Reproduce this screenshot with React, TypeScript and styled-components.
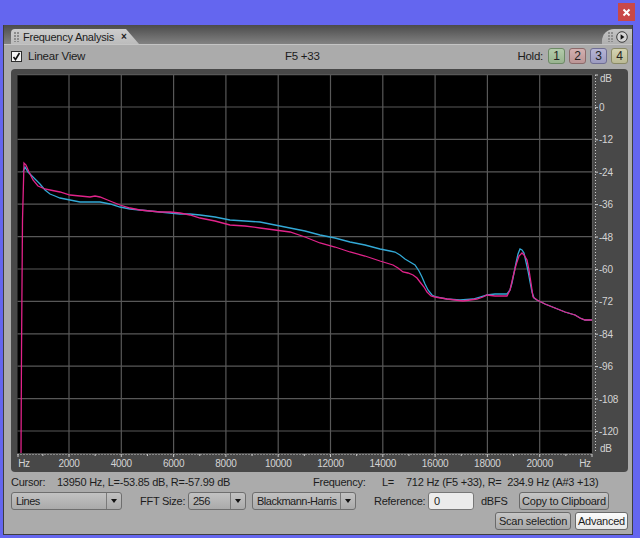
import React from 'react';
import styled, { createGlobalStyle } from 'styled-components';

const GlobalStyle = createGlobalStyle`
  html, body {
    margin: 0;
    padding: 0;
    background: #6466ef;
  }
  body {
    font-family: 'Liberation Sans', Arial, sans-serif;
    font-size: 11px;
    letter-spacing: -0.25px;
    color: #1c1c1c;
  }
`;

const Frame = styled.div`
  width: 640px;
  height: 538px;
  box-sizing: border-box;
  padding: 0 7px 3px 3px;
  background: #6466ef;
  display: flex;
  flex-direction: column;
`;

const TitleBar = styled.div`
  height: 25px;
  flex: none;
  display: flex;
  justify-content: flex-end;
  align-items: flex-start;
  padding-top: 3px;
  box-sizing: border-box;
  margin-right: -2px;
`;

const CloseButton = styled.div`
  width: 17px;
  height: 18px;
  background: #c94848;
  display: flex;
  align-items: center;
  justify-content: center;
`;

const Panel = styled.div`
  flex: 1;
  display: flex;
  flex-direction: column;
  background: #ababab;
  border: 1px solid #3e3e3e;
  border-top: none;
`;

const TabStrip = styled.div`
  height: 19px;
  flex: none;
  display: flex;
  align-items: flex-end;
  padding-left: 7px;
  background: linear-gradient(#4b4b4b, #828282);
  border-bottom: 1px solid #c4c4c4;
`;

const Tab = styled.div`
  width: 128px;
  height: 15px;
  box-sizing: border-box;
  display: flex;
  align-items: center;
  gap: 4px;
  padding-left: 3px;
  background: linear-gradient(#cdcdcd, #bcbcbc);
  border-radius: 4px 4px 0 0;
  clip-path: polygon(0 0, 115px 0, 128px 100%, 0 100%);
  font-size: 11px;
`;

const Grip = styled.span`
  width: 5px;
  height: 10px;
  flex: none;
  background-image: radial-gradient(circle at 1px 1px, #8c8c8c 0.9px, transparent 1px);
  background-size: 3px 3px;
`;

const TabClose = styled.span`
  margin-left: 3px;
  font-weight: bold;
  font-size: 10px;
`;

const Flap = styled.div`
  margin-left: auto;
  width: 30px;
  height: 15px;
  display: flex;
  align-items: center;
  gap: 3px;
  padding-left: 6px;
  box-sizing: border-box;
  background: linear-gradient(#c4c4c4, #b0b0b0);
  border-radius: 12px 0 0 0;
`;

const Toolbar = styled.div`
  height: 22px;
  flex: none;
  display: flex;
  align-items: center;
  padding: 0 4px 0 7px;
`;

const CheckGroup = styled.div`
  width: 274px;
  display: flex;
  align-items: center;
  gap: 6px;
  font-size: 11.5px;
`;

const CheckBox = styled.span`
  width: 11px;
  height: 11px;
  box-sizing: border-box;
  border: 1px solid #2c2c2c;
  background: #f4f4f4;
  display: flex;
  align-items: center;
  justify-content: center;
`;

const Note = styled.span`
  font-size: 11.5px;
`;

const HoldGroup = styled.div`
  margin-left: auto;
  display: flex;
  align-items: center;
  gap: 4px;
`;

const HoldLabel = styled.span`
  margin-right: 1px;
  font-size: 11.5px;
`;

const HoldButton = styled.span<{ $bg: string; $border: string }>`
  width: 17px;
  height: 16px;
  box-sizing: border-box;
  border: 1px solid ${(p) => p.$border};
  border-radius: 3px;
  background: ${(p) => p.$bg};
  display: flex;
  align-items: center;
  justify-content: center;
  font-size: 12px;
  color: #222;
`;

const GraphPanel = styled.div`
  height: 403px;
  flex: none;
  margin: 2px 4px 0 7px;
  background: #484848;
  border-radius: 4px;
  overflow: hidden;
`;

const InfoRow = styled.div`
  height: 16px;
  flex: none;
  margin-top: 2px;
  display: flex;
  align-items: center;
  padding-left: 7px;
  white-space: pre;
`;

const Field = styled.span<{ $w?: number; $pl?: number }>`
  flex: none;
  box-sizing: border-box;
  width: ${(p) => (p.$w ? `${p.$w}px` : 'auto')};
  padding-left: ${(p) => p.$pl ?? 0}px;
  white-space: pre;
`;

const ControlsRow = styled.div`
  height: 18px;
  flex: none;
  margin-top: 2px;
  display: flex;
  align-items: center;
  padding: 0 4px 0 7px;
`;

const Select = styled.div<{ $w: number; $ml?: number }>`
  width: ${(p) => p.$w}px;
  margin-left: ${(p) => p.$ml ?? 0}px;
  height: 18px;
  box-sizing: border-box;
  flex: none;
  display: flex;
  border: 1px solid #6e6e6e;
  border-radius: 3px;
  background: linear-gradient(#c2c2c2, #aaaaaa);
`;

const SelectText = styled.span`
  flex: 1;
  display: flex;
  align-items: center;
  padding-left: 4px;
  white-space: nowrap;
  overflow: hidden;
  letter-spacing: -0.5px;
`;

const SelectArrow = styled.span`
  width: 14px;
  flex: none;
  border-left: 1px solid #7a7a7a;
  display: flex;
  align-items: center;
  justify-content: center;
  &::after {
    content: '';
    border-left: 3px solid transparent;
    border-right: 3px solid transparent;
    border-top: 4px solid #111;
  }
`;

const TextInput = styled.div`
  width: 46px;
  height: 18px;
  box-sizing: border-box;
  flex: none;
  border: 1px solid #777;
  border-radius: 3px;
  background: #ececec;
  display: flex;
  align-items: center;
  padding-left: 5px;
`;

const Button = styled.div<{ $w: number; $light?: boolean }>`
  width: ${(p) => p.$w}px;
  height: 18px;
  box-sizing: border-box;
  flex: none;
  border: 1px solid #6a6a6a;
  border-radius: 3px;
  background: ${(p) =>
    p.$light ? 'linear-gradient(#fbfbfb, #e8e8e8)' : 'linear-gradient(#c6c6c6, #a6a6a6)'};
  display: flex;
  align-items: center;
  justify-content: center;
  white-space: nowrap;
  font-size: 11px;
`;

const ButtonsRow = styled.div`
  height: 18px;
  flex: none;
  margin-top: 2px;
  display: flex;
  justify-content: flex-end;
  gap: 4px;
  padding-right: 4px;
`;

const cyan: [number, number][] = [
  [23, 172], [25, 167], [28, 172], [32, 176], [36, 180], [40, 184], [45, 190], [50, 194],
  [55, 196], [60, 198], [70, 200], [80, 202], [90, 202], [100, 202], [110, 204], [120, 207],
  [130, 209], [140, 210], [150, 211], [160, 212], [170, 213], [180, 214], [190, 214], [200, 215],
  [215, 217], [230, 220], [245, 221], [260, 222], [275, 225], [290, 228], [305, 231], [320, 235],
  [335, 238], [350, 242], [365, 245], [380, 249], [390, 251], [395, 252], [400, 255], [405, 259],
  [410, 262], [415, 265], [419, 271], [422, 277], [425, 284], [428, 290], [432, 295], [436, 297],
  [447, 299], [460, 300], [473, 299], [480, 297], [487, 295], [495, 294], [507, 294], [510, 290],
  [512, 283], [514, 273], [516, 263], [518, 254], [520, 249], [522, 250], [524, 253], [526, 262],
  [528, 271], [530, 282], [532, 292], [534, 298], [537, 300], [545, 304], [555, 308], [565, 312],
  [575, 315], [580, 318], [585, 320], [592, 320],
];

const magenta: [number, number][] = [
  [21, 453], [21.5, 352], [22.5, 220], [24, 163], [26, 165], [29, 172], [33, 180], [38, 186],
  [45, 189], [50, 190], [60, 192], [70, 195], [80, 196], [90, 197], [95, 196], [100, 197],
  [110, 201], [120, 205], [130, 208], [140, 210], [150, 211], [160, 212], [170, 212], [180, 213],
  [190, 215], [200, 218], [215, 221], [230, 225], [245, 226], [260, 228], [275, 230], [290, 232],
  [305, 237], [320, 243], [335, 247], [350, 252], [365, 256], [380, 261], [393, 265], [398, 268],
  [403, 272], [408, 273], [413, 275], [417, 278], [420, 282], [424, 287], [427, 292], [431, 296],
  [435, 297], [447, 299], [463, 301], [470, 300], [477, 299], [483, 297], [487, 295], [495, 296],
  [507, 296], [510, 290], [513, 277], [516, 265], [519, 256], [522, 253], [524, 255], [527, 260],
  [529, 270], [531, 283], [533, 297], [537, 300], [545, 304], [555, 308], [565, 312], [575, 315],
  [580, 318], [585, 320], [592, 320],
];

const toPoints = (pts: [number, number][]) => pts.map(([x, y]) => `${x},${y}`).join(' ');

const PLOT = { left: 17.5, right: 592.5, top: 75, bottom: 453 };
const hzStep = 52.3;
const dbStep = 32.4;
const dbLabels = ['0', '-12', '-24', '-36', '-48', '-60', '-72', '-84', '-96', '-108', '-120'];
const hzLabels = ['2000', '4000', '6000', '8000', '10000', '12000', '14000', '16000', '18000', '20000'];

const Spectrum = () => {
  const vx = hzLabels.map((_, i) => 16.7 + hzStep * (i + 1));
  const hy = Array.from({ length: 12 }, (_, i) => 74.6 + dbStep * i);
  const axisColor = '#c9c9c9';
  return (
    <svg width="617" height="403" viewBox="11 69 617 403" style={{ display: 'block' }}>
      <rect x={PLOT.left} y={PLOT.top} width={PLOT.right - PLOT.left} height={PLOT.bottom - PLOT.top} fill="#000" />
      <g stroke="#585858" strokeWidth="1.2">
        {vx.map((x) => (
          <line key={x} x1={x} x2={x} y1={PLOT.top} y2={PLOT.bottom} />
        ))}
        {hy.map((y) => (
          <line key={y} x1={PLOT.left} x2={PLOT.right} y1={y} y2={y} />
        ))}
        <line x1={PLOT.right} x2={PLOT.right} y1={PLOT.top} y2={PLOT.bottom} />
      </g>
      <polyline points={toPoints(cyan)} fill="none" stroke="#33a9d6" strokeWidth="1.3" />
      <polyline points={toPoints(magenta)} fill="none" stroke="#e1238a" strokeWidth="1.3" />

      {/* right dB axis */}
      <line x1="595.5" x2="595.5" y1={PLOT.top} y2={PLOT.bottom} stroke={axisColor} strokeDasharray="1 2" />
      <g stroke={axisColor}>
        {hy.map((y) => (
          <line key={y} x1="595" x2="598" y1={y + 0.4} y2={y + 0.4} />
        ))}
      </g>
      <g fill="#d4d4d4" fontSize="10" fontFamily="'Liberation Sans', Arial, sans-serif">
        <text x="600" y="82">dB</text>
        {dbLabels.map((l, i) => (
          <text key={l} x="599" y={107 + dbStep * i + 4}>
            {l}
          </text>
        ))}
        <text x="600" y="452">dB</text>
      </g>

      {/* bottom Hz axis */}
      <line x1={PLOT.left} x2={PLOT.right} y1="454.5" y2="454.5" stroke={axisColor} strokeDasharray="1 2" />
      <g stroke={axisColor}>
        <line x1="18" x2="18" y1="454" y2="457" />
        {vx.map((x) => (
          <line key={x} x1={x} x2={x} y1="454" y2="457" />
        ))}
        {vx.map((x) => (
          <line key={`m${x}`} x1={x - hzStep / 2} x2={x - hzStep / 2} y1="454" y2="456" />
        ))}
        <line x1={vx[9] + hzStep / 2} x2={vx[9] + hzStep / 2} y1="454" y2="456" />
        <line x1="592" x2="592" y1="454" y2="457" />
      </g>
      <g fill="#d4d4d4" fontSize="10" fontFamily="'Liberation Sans', Arial, sans-serif" textAnchor="middle">
        <text x="24" y="467">Hz</text>
        {hzLabels.map((l, i) => (
          <text key={l} x={vx[i]} y="467">
            {l}
          </text>
        ))}
        <text x="585" y="467">Hz</text>
      </g>
    </svg>
  );
};

const holds = [
  { n: '1', bg: 'linear-gradient(#b3cbab, #98b38f)', border: '#6d8a66' },
  { n: '2', bg: 'linear-gradient(#d3b0b0, #bb9595)', border: '#8c6a6a' },
  { n: '3', bg: 'linear-gradient(#b6b5d6, #9c9bc0)', border: '#706f95' },
  { n: '4', bg: 'linear-gradient(#d4d3b2, #bbba95)', border: '#8a8a66' },
];

export default function App() {
  return (
    <Frame>
      <GlobalStyle />
      <TitleBar>
        <CloseButton>
          <svg width="9" height="9" viewBox="0 0 9 9">
            <path d="M1.5 1.5 L7.5 7.5 M7.5 1.5 L1.5 7.5" stroke="#fff" strokeWidth="2" />
          </svg>
        </CloseButton>
      </TitleBar>
      <Panel>
        <TabStrip>
          <Tab>
            <Grip />
            <span>Frequency Analysis</span>
            <TabClose>×</TabClose>
          </Tab>
          <Flap>
            <Grip />
            <svg width="12" height="12" viewBox="0 0 12 12">
              <circle cx="6" cy="6" r="5.3" fill="#d4d4d4" stroke="#3a3a3a" strokeWidth="1" />
              <path d="M4.6 3.3 L8.4 6 L4.6 8.7 Z" fill="#111" />
            </svg>
          </Flap>
        </TabStrip>
        <Toolbar>
          <CheckGroup>
            <CheckBox>
              <svg width="9" height="9" viewBox="0 0 9 9">
                <path d="M1.5 5 L3.5 7.5 L7.5 1" fill="none" stroke="#111" strokeWidth="1.6" />
              </svg>
            </CheckBox>
            <span>Linear View</span>
          </CheckGroup>
          <Note>F5 +33</Note>
          <HoldGroup>
            <HoldLabel>Hold:</HoldLabel>
            {holds.map((h) => (
              <HoldButton key={h.n} $bg={h.bg} $border={h.border}>
                {h.n}
              </HoldButton>
            ))}
          </HoldGroup>
        </Toolbar>
        <GraphPanel>
          <Spectrum />
        </GraphPanel>
        <InfoRow>
          <Field $w={46}>Cursor:</Field>
          <Field $w={256}>13950 Hz, L=-53.85 dB, R=-57.99 dB</Field>
          <Field $w={69}>Frequency:</Field>
          <Field $w={24}>L=</Field>
          <Field>712 Hz (F5 +33), R=  234.9 Hz (A#3 +13)</Field>
        </InfoRow>
        <ControlsRow>
          <Select $w={111}>
            <SelectText>Lines</SelectText>
            <SelectArrow />
          </Select>
          <Field $w={66} $pl={18}>
            FFT Size:
          </Field>
          <Select $w={58}>
            <SelectText>256</SelectText>
            <SelectArrow />
          </Select>
          <Select $w={104} $ml={6}>
            <SelectText>Blackmann-Harris</SelectText>
            <SelectArrow />
          </Select>
          <Field $w={72} $pl={18}>
            Reference:
          </Field>
          <TextInput>0</TextInput>
          <Field $w={45} $pl={7}>
            dBFS
          </Field>
          <Button $w={90}>Copy to Clipboard</Button>
        </ControlsRow>
        <ButtonsRow>
          <Button $w={76}>Scan selection</Button>
          <Button $w={53} $light>
            Advanced
          </Button>
        </ButtonsRow>
      </Panel>
    </Frame>
  );
}
